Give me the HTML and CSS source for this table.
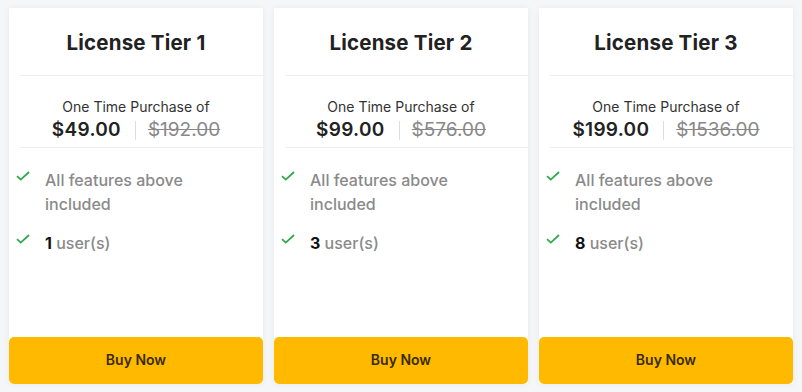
FILE: index.html
```html
<!DOCTYPE html>
<html>
<head>
<meta charset="utf-8">
<link rel="stylesheet" href="styles.css">
</head>
<body>
<div class="tiers">
  <div class="card">
    <div class="title">License Tier 1</div>
    <div class="price-block">
      <div class="otp">One Time Purchase of</div>
      <div class="prices"><span class="now">$49.00</span><span class="sep"></span><span class="was">$192.00</span></div>
    </div>
    <ul class="features">
      <li><svg class="check" viewBox="0 0 14 10"><path d="M1 5.2 L4.8 8.6 L13 1"/></svg><span>All features above included</span></li>
      <li><svg class="check" viewBox="0 0 14 10"><path d="M1 5.2 L4.8 8.6 L13 1"/></svg><span><b>1</b> user(s)</span></li>
    </ul>
    <button class="buy">Buy Now</button>
  </div>
  <div class="card">
    <div class="title">License Tier 2</div>
    <div class="price-block">
      <div class="otp">One Time Purchase of</div>
      <div class="prices"><span class="now">$99.00</span><span class="sep"></span><span class="was">$576.00</span></div>
    </div>
    <ul class="features">
      <li><svg class="check" viewBox="0 0 14 10"><path d="M1 5.2 L4.8 8.6 L13 1"/></svg><span>All features above included</span></li>
      <li><svg class="check" viewBox="0 0 14 10"><path d="M1 5.2 L4.8 8.6 L13 1"/></svg><span><b>3</b> user(s)</span></li>
    </ul>
    <button class="buy">Buy Now</button>
  </div>
  <div class="card">
    <div class="title">License Tier 3</div>
    <div class="price-block">
      <div class="otp">One Time Purchase of</div>
      <div class="prices"><span class="now">$199.00</span><span class="sep"></span><span class="was">$1536.00</span></div>
    </div>
    <ul class="features">
      <li><svg class="check" viewBox="0 0 14 10"><path d="M1 5.2 L4.8 8.6 L13 1"/></svg><span>All features above included</span></li>
      <li><svg class="check" viewBox="0 0 14 10"><path d="M1 5.2 L4.8 8.6 L13 1"/></svg><span><b>8</b> user(s)</span></li>
    </ul>
    <button class="buy">Buy Now</button>
  </div>
</div>
</body>
</html>
```
FILE: styles.css
```css
* { box-sizing: border-box; }
html, body { margin: 0; padding: 0; }
body {
  background: #f5f6f8;
  font-family: Inter, "Noto Sans", sans-serif;
  color: #222;
  width: 802px;
  height: 392px;
  overflow: hidden;
}
.tiers {
  display: grid;
  grid-template-columns: repeat(3, 254px);
  column-gap: 11px;
  padding: 8px 9px;
}
.card {
  background: #fff;
  height: 376px;
  display: flex;
  flex-direction: column;
  box-shadow: 0 0 6px rgba(0,0,0,0.06);
}
.title {
  height: 68px;
  margin-left: 11px;
  padding-right: 11px;
  border-bottom: 1px solid #eeeeee;
  display: flex;
  align-items: center;
  justify-content: center;
  font-size: 20.5px;
  font-weight: 700;
  letter-spacing: 0.2px;
  color: #222;
  padding-top: 1px;
}
.price-block {
  height: 72px;
  margin-left: 11px;
  padding-right: 11px;
  border-bottom: 1px solid #eeeeee;
  display: flex;
  flex-direction: column;
  align-items: center;
  padding-top: 22px;
}
.otp {
  font-size: 14px;
  color: #333;
  line-height: 18px;
}
.prices {
  display: flex;
  align-items: center;
  margin-top: 2px;
  font-size: 19px;
  line-height: 24px;
}
.now { font-weight: 600; color: #222; letter-spacing: 0.3px; }
.sep {
  width: 1px;
  height: 19px;
  background: #ddd;
  margin: 0 12px 0 14px;
}
.was { color: #888; text-decoration: line-through; }
.features {
  list-style: none;
  margin: 0;
  padding: 20px 0 0 7px;
  flex: 1;
}
.features li {
  display: flex;
  align-items: flex-start;
  font-size: 16px;
  line-height: 24px;
  color: #8a8a8a;
  font-weight: 500;
  margin-bottom: 15px;
  padding-right: 40px;
}
.features li span { padding-left: 15px; }
.features b { color: #111; font-weight: 700; }
.check {
  width: 14px;
  height: 10px;
  margin-top: 3px;
  flex: none;
  fill: none;
  stroke: #2eaa4a;
  stroke-width: 1.8;
}
.buy {
  height: 47px;
  border: none;
  border-radius: 5px;
  background: #ffba00;
  color: #3a2a00;
  font-family: inherit;
  font-size: 14px;
  font-weight: 600;
  cursor: pointer;
  width: 100%;
  padding-bottom: 3px;
}
```
